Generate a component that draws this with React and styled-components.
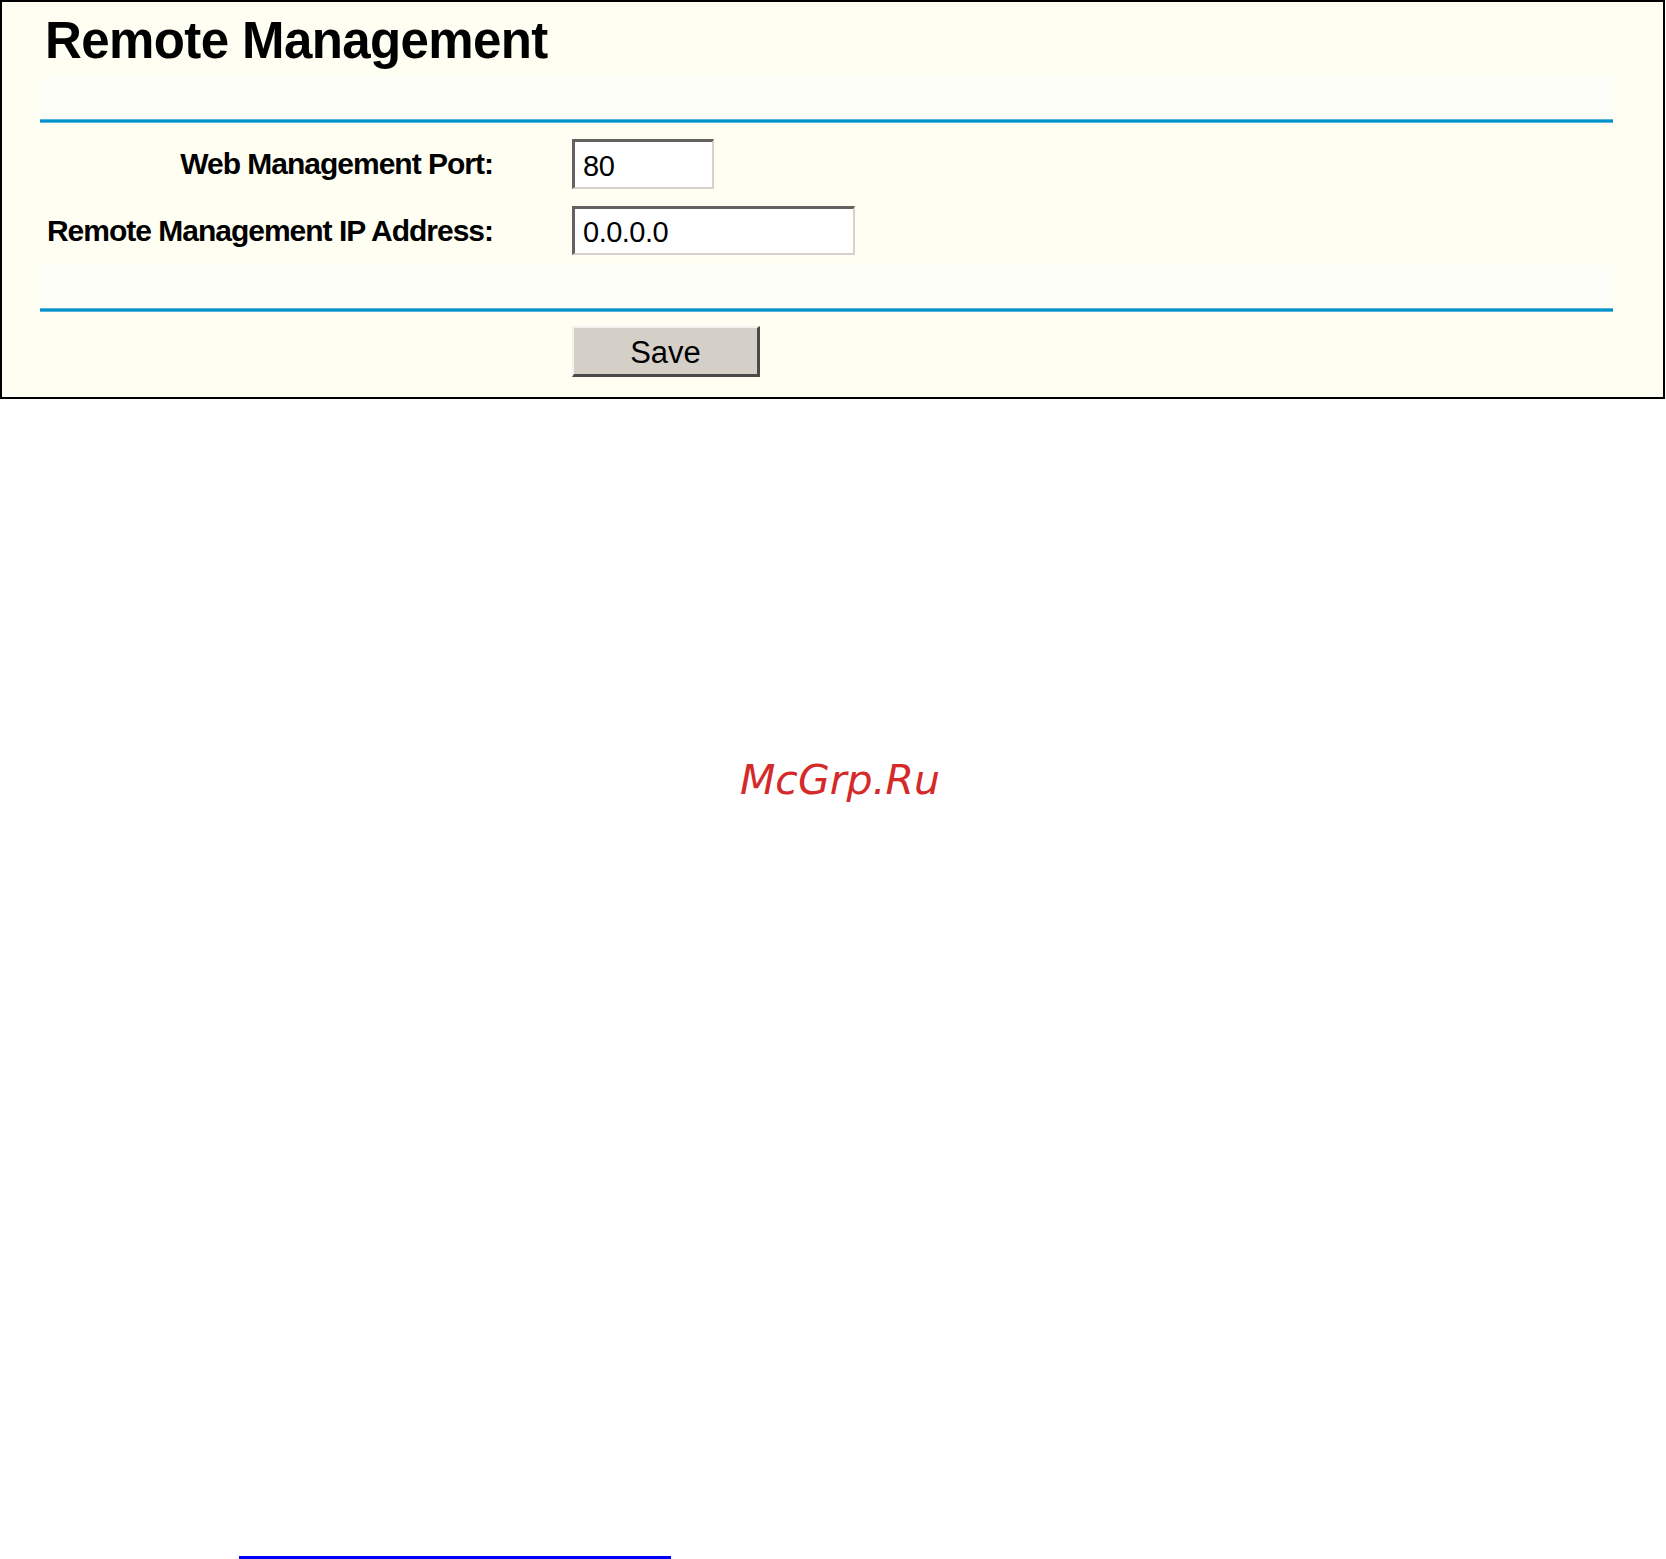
import React from "react";
import styled, { createGlobalStyle } from "styled-components";

const Global = createGlobalStyle`
  html, body {
    margin: 0;
    padding: 0;
    background: #ffffff;
    overflow: hidden;
  }
  #root {
    width: 1666px;
    height: 1559px;
  }
`;

const Page = styled.div`
  width: 1666px;
  height: 1559px;
  display: flex;
  flex-direction: column;
  font-family: "Liberation Sans", Arial, sans-serif;
`;

const Panel = styled.section`
  box-sizing: border-box;
  width: 1665px;
  height: 399px;
  border: 2px solid #000000;
  background: #fefef2;
  display: flex;
  flex-direction: column;
  padding: 0 50px 0 38px;
`;

const Title = styled.h1`
  margin: 0;
  height: 67px;
  padding: 7px 0 0 5px;
  font-size: 51px;
  line-height: 64px;
  font-weight: bold;
  letter-spacing: -0.6px;
  color: #000000;
`;

const Band = styled.div`
  height: ${(p) => p.$h}px;
  background: #fcfdf7;
`;

const Rule = styled.div`
  box-sizing: border-box;
  height: 4px;
  background: #0093cb;
  border-top: 1px solid #56b4dc;
  border-bottom: 1px solid #56b4dc;
`;

const FormGrid = styled.div`
  display: grid;
  grid-template-columns: 532px 1fr;
  row-gap: 17px;
  align-items: center;
  padding: 16px 0 10px 0;
`;

const Label = styled.label`
  text-align: right;
  padding-right: 79px;
  font-size: 30px;
  font-weight: bold;
  letter-spacing: -1px;
  color: #000000;
  white-space: nowrap;
`;

const Field = styled.input`
  box-sizing: border-box;
  width: ${(p) => p.$w}px;
  height: ${(p) => p.$h}px;
  margin: 0;
  padding: 3px 0 0 8px;
  background: #ffffff;
  border-style: solid;
  border-width: 3px 2px 2px 3px;
  border-color: #626262 #d6d2ca #d6d2ca #626262;
  font-family: "Liberation Sans", Arial, sans-serif;
  font-size: 29px;
  letter-spacing: -0.5px;
  color: #000000;
  outline: none;
`;

const ButtonRow = styled.div`
  display: grid;
  grid-template-columns: 532px 1fr;
  padding-top: 14px;
`;

const SaveButton = styled.button`
  grid-column: 2;
  box-sizing: border-box;
  width: 188px;
  height: 51px;
  margin: 0;
  padding: 3px 0 0 0;
  background: #d4d0c8;
  border-style: solid;
  border-width: 2px 3px 3px 2px;
  border-color: #f2f1ee #4a4a4a #4a4a4a #f2f1ee;
  font-family: "Liberation Sans", Arial, sans-serif;
  font-size: 31px;
  color: #000000;
`;

const WatermarkArea = styled.div`
  padding-top: 358px;
  padding-left: 740px;
  height: 46px;
`;

const Watermark = styled.span`
  font-family: "DejaVu Sans", sans-serif;
  font-style: oblique;
  font-size: 41px;
  line-height: 46px;
  color: #d42a2a;
`;

const Footer = styled.div`
  flex: 1;
  display: flex;
  align-items: flex-end;
  padding-left: 239px;
`;

const LinkUnderline = styled.div`
  width: 432px;
  height: 3px;
  background: #0000ff;
`;

export default function App() {
  return (
    <>
      <Global />
      <Page>
        <Panel>
          <Title>Remote Management</Title>
          <Band $h={43} />
          <Rule />
          <FormGrid>
            <Label htmlFor="port">Web Management Port:</Label>
            <Field id="port" $w={142} $h={50} defaultValue="80" readOnly />
            <Label htmlFor="ip">Remote Management IP Address:</Label>
            <Field id="ip" $w={283} $h={49} defaultValue="0.0.0.0" readOnly />
          </FormGrid>
          <Band $h={43} />
          <Rule />
          <ButtonRow>
            <SaveButton type="button">Save</SaveButton>
          </ButtonRow>
        </Panel>
        <WatermarkArea>
          <Watermark>McGrp.Ru</Watermark>
        </WatermarkArea>
        <Footer>
          <LinkUnderline />
        </Footer>
      </Page>
    </>
  );
}
